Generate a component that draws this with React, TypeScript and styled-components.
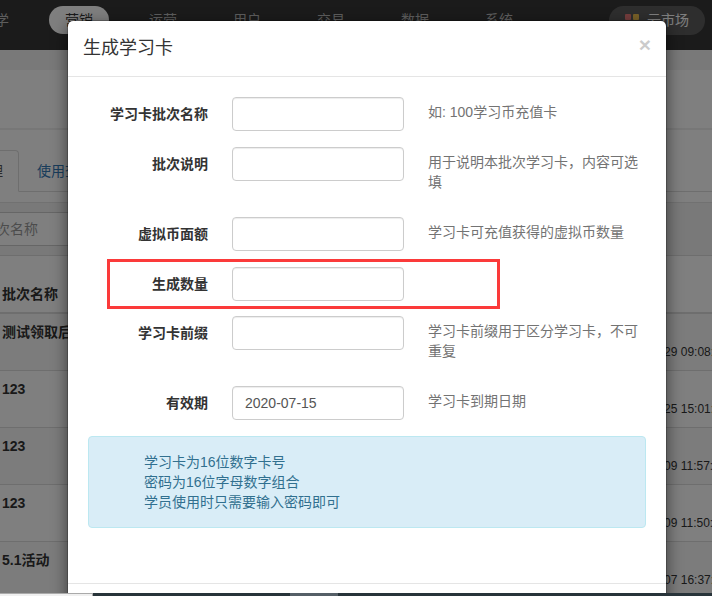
import React from "react";
import styled, { createGlobalStyle } from "styled-components";

const Global = createGlobalStyle`
  *, *::before, *::after { box-sizing: border-box; }
  body {
    margin: 0;
    font: 14px/20px "Liberation Sans", "Noto Sans CJK SC", sans-serif;
    color: #333;
    background: #fff;
    overflow: hidden;
  }
  button, input { font: inherit; color: inherit; }
`;

const Screen = styled.div`
  display: flex;
  flex-direction: column;
  height: 100vh;
`;

const Viewport = styled.div`
  position: relative;
  flex: 1;
  min-height: 0;
  overflow: hidden;
`;

const Page = styled.div`
  margin-left: -83px;
  background: #fff;
`;

const TopNav = styled.nav`
  display: flex;
  align-items: flex-start;
  height: 50px;
  padding: 6px 7px 0 36px;
  background: #363636;
`;

const NavItem = styled.a<{ $active?: boolean }>`
  width: 60px;
  margin: 0 12px;
  border-radius: 14px;
  line-height: 28px;
  text-align: center;
  text-decoration: none;
  color: ${(p) => (p.$active ? "#333" : "#bbb")};
  background: ${(p) => (p.$active ? "#fff" : "transparent")};
`;

const Market = styled.a`
  display: flex;
  align-items: center;
  gap: 8px;
  margin-left: auto;
  padding: 0 16px;
  border-radius: 15px;
  line-height: 29px;
  color: #fff;
  text-decoration: none;
  background: #5c5c5c;
`;

const Strip = styled.div`
  height: 20px;
  background: #f2f2f2;
`;

const Heading = styled.div`
  height: 60px;
  border-bottom: 2px solid #eee;
`;

const Tabs = styled.div`
  display: flex;
  gap: 2px;
  padding-top: 20px;
  border-bottom: 1px solid #ddd;
`;

const Tab = styled.a<{ $active?: boolean }>`
  padding: 10px 15px;
  margin-bottom: -1px;
  border: 1px solid ${(p) => (p.$active ? "#ddd" : "transparent")};
  border-bottom-color: ${(p) => (p.$active ? "#fff" : "transparent")};
  border-radius: 4px 4px 0 0;
  color: ${(p) => (p.$active ? "#555" : "#337ab7")};
  text-decoration: none;
`;

const SearchBar = styled.div`
  margin-top: 10px;
  padding: 9px 52px;
  border-top: 1px solid #e3e3e3;
  background: #f2f2f2;
`;

const SearchInput = styled.input`
  display: block;
  width: 172px;
  height: 34px;
  padding: 6px 12px;
  border: 1px solid #ccc;
  background: #fff;
  &::placeholder { color: #999; opacity: 1; }
`;

const Table = styled.table`
  width: 100%;
  table-layout: fixed;
  border-collapse: separate;
  border-spacing: 0;
  border-top: 1px solid #ddd;
  tbody tr:nth-child(odd) { background: #f9f9f9; }
`;

const HeadCell = styled.th`
  height: 58px;
  padding: 28px 0 8px 85px;
  border-bottom: 2px solid #ddd;
  text-align: left;
  vertical-align: top;
`;

const DateHead = styled(HeadCell)`
  width: 96px;
  padding-left: 0;
`;

const NameCell = styled.td`
  height: 57px;
  padding: 8px 0 8px 85px;
  border-bottom: 1px solid #ddd;
  font-weight: bold;
  vertical-align: top;
`;

const DateCell = styled.td`
  padding: 28px 0 8px;
  border-bottom: 1px solid #ddd;
  font-size: 12px;
  white-space: nowrap;
  vertical-align: top;
`;

const Backdrop = styled.div`
  position: absolute;
  inset: 0;
  padding: 20px 45px 0 67px;
  background: rgba(0, 0, 0, 0.5);
`;

const Dialog = styled.section`
  border: 1px solid rgba(0, 0, 0, 0.2);
  border-radius: 6px;
  background: #fff;
  background-clip: padding-box;
  box-shadow: 0 5px 15px rgba(0, 0, 0, 0.5);
`;

const DialogHeader = styled.header`
  display: flex;
  justify-content: space-between;
  align-items: flex-start;
  padding: 15px;
  border-bottom: 1px solid #e5e5e5;
`;

const Title = styled.h4`
  margin: 0;
  font-size: 18px;
  line-height: 25px;
  font-weight: normal;
`;

const Close = styled.button`
  padding: 0;
  margin-top: -2px;
  border: 0;
  background: none;
  font-size: 21px;
  line-height: 21px;
  font-weight: bold;
  color: #000;
  opacity: 0.2;
  cursor: pointer;
`;

const DialogBody = styled.form`
  padding: 20px 20px 35px;
`;

const FormRow = styled.div<{ $marked?: boolean }>`
  position: relative;
  display: grid;
  grid-template-columns: 120px 172px 1fr;
  column-gap: 24px;
  align-items: start;
  margin-bottom: 15px;
  &::after {
    content: "";
    display: ${(p) => (p.$marked ? "block" : "none")};
    position: absolute;
    top: -8px;
    left: 19px;
    width: 393px;
    height: 50px;
    border: 3px solid #fb3a3a;
    pointer-events: none;
  }
`;

const Label = styled.label`
  padding-top: 7px;
  font-weight: bold;
  text-align: right;
`;

const Input = styled.input`
  width: 100%;
  height: 34px;
  padding: 6px 12px;
  border: 1px solid #ccc;
  border-radius: 4px;
  background: #fff;
  color: #555;
  box-shadow: inset 0 1px 1px rgba(0, 0, 0, 0.075);
`;

const Help = styled.p`
  margin: 5px 0 10px;
  color: #737373;
`;

const Alert = styled.div`
  margin-bottom: 20px;
  padding: 15px 55px;
  border: 1px solid #bce8f1;
  border-radius: 4px;
  background: #d9edf7;
  color: #31708f;
`;

const DialogFooter = styled.footer`
  height: 65px;
  border-top: 1px solid #e5e5e5;
`;

const Taskbar = styled.div`
  display: flex;
  height: 3px;
  background: #28343a;
`;

const StatusBubble = styled.div`
  width: 93px;
  border-top: 1px solid #aaa;
  border-right: 1px solid #aaa;
  background: #f0f0f0;
`;

const TaskButton = styled.div`
  width: 48px;
  margin-left: 197px;
  background: #555f67;
`;

const navItems = ["教学", "营销", "运营", "用户", "交易", "数据", "系统"];

const batches = [
  { name: "测试领取后", date: "2020-06-29 09:08:13" },
  { name: "123", date: "2020-05-25 15:01:20" },
  { name: "123", date: "2020-05-09 11:57:42" },
  { name: "123", date: "2020-05-09 11:50:36" },
  { name: "5.1活动", date: "2020-05-07 16:37:05" },
];

const fields = [
  { id: "name", label: "学习卡批次名称", help: "如: 100学习币充值卡" },
  { id: "note", label: "批次说明", help: "用于说明本批次学习卡，内容可选填" },
  { id: "value", label: "虚拟币面额", help: "学习卡可充值获得的虚拟币数量" },
  { id: "count", label: "生成数量", marked: true },
  { id: "prefix", label: "学习卡前缀", help: "学习卡前缀用于区分学习卡，不可重复" },
  { id: "expiry", label: "有效期", help: "学习卡到期日期", value: "2020-07-15" },
];

const MarketIcon = () => (
  <svg width="14" height="14" viewBox="0 0 14 14" aria-hidden="true">
    <rect width="6" height="6" rx="1" fill="#e87a7a" />
    <rect x="8" width="6" height="6" rx="1" fill="#f0c050" />
    <rect y="8" width="6" height="6" rx="1" fill="#6fb4ee" />
    <rect x="8" y="8" width="6" height="6" rx="1" fill="#7ccf8a" />
  </svg>
);

export default function App() {
  return (
    <>
      <Global />
      <Screen>
        <Viewport>
          <Page>
            <TopNav>
              {navItems.map((item) => (
                <NavItem key={item} href="#" $active={item === "营销"}>
                  {item}
                </NavItem>
              ))}
              <Market href="#">
                <MarketIcon />
                云市场
              </Market>
            </TopNav>
            <Strip />
            <Heading />
            <Tabs>
              <Tab href="#" $active>
                学习卡管理
              </Tab>
              <Tab href="#">使用查询</Tab>
            </Tabs>
            <SearchBar>
              <SearchInput placeholder="批次名称" aria-label="批次名称" />
            </SearchBar>
            <Table>
              <thead>
                <tr>
                  <HeadCell>批次名称</HeadCell>
                  <DateHead />
                </tr>
              </thead>
              <tbody>
                {batches.map((b) => (
                  <tr key={b.date}>
                    <NameCell>{b.name}</NameCell>
                    <DateCell>{b.date}</DateCell>
                  </tr>
                ))}
              </tbody>
            </Table>
          </Page>
          <Backdrop>
            <Dialog role="dialog" aria-labelledby="dialog-title">
              <DialogHeader>
                <Title id="dialog-title">生成学习卡</Title>
                <Close type="button">×</Close>
              </DialogHeader>
              <DialogBody>
                {fields.map((f) => (
                  <FormRow key={f.id} $marked={f.marked}>
                    <Label htmlFor={f.id}>{f.label}</Label>
                    <Input id={f.id} type="text" defaultValue={f.value} />
                    {f.help && <Help>{f.help}</Help>}
                  </FormRow>
                ))}
                <Alert>
                  学习卡为16位数字卡号
                  <br />
                  密码为16位字母数字组合
                  <br />
                  学员使用时只需要输入密码即可
                </Alert>
              </DialogBody>
              <DialogFooter />
            </Dialog>
          </Backdrop>
        </Viewport>
        <Taskbar>
          <StatusBubble />
          <TaskButton />
        </Taskbar>
      </Screen>
    </>
  );
}
